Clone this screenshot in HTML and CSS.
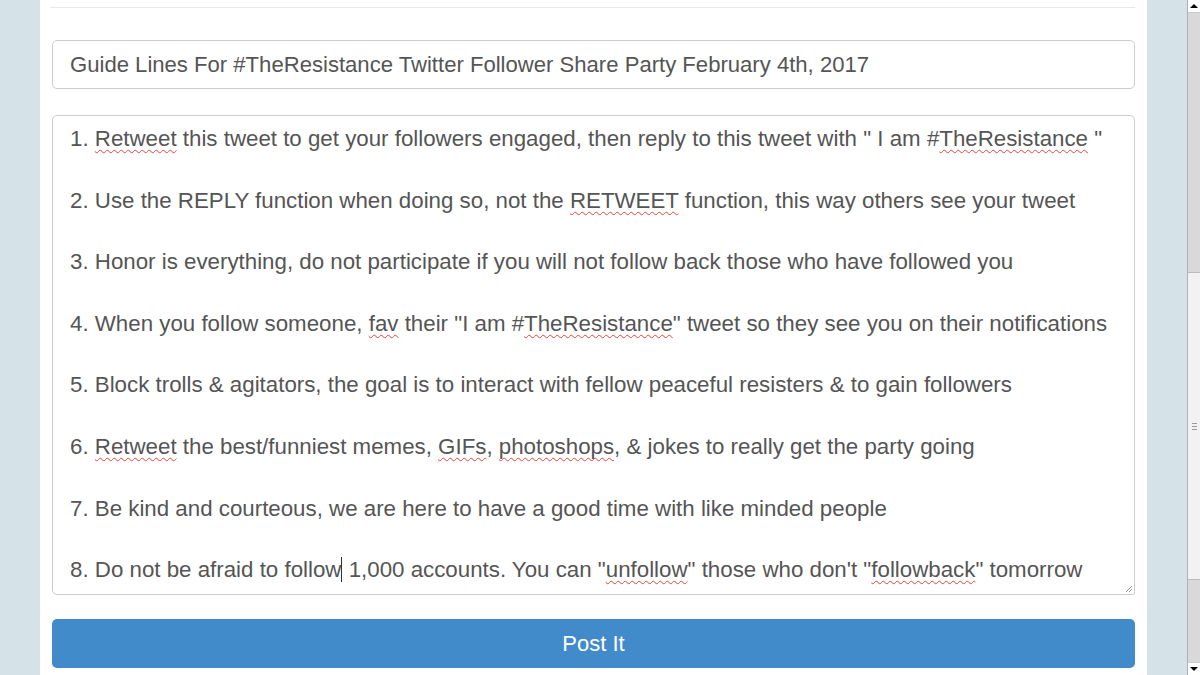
FILE: index.html
```html
<!DOCTYPE html>
<html lang="en">

<head>
    <meta charset="UTF-8">
    <meta name="viewport" content="width=device-width, initial-scale=1.0">
    <title>Post It</title>
    <link rel="stylesheet" href="styles.css">
</head>

<body>
    <div class="page">
        <div class="main">
            <div class="panel">
                <div class="rule"></div>

                <div class="title-input">Guide Lines For #TheResistance Twitter Follower Share Party February 4th, 2017</div>

                <div class="message">
                    <p>1. <span class="typo">Retweet</span> this tweet to get your followers engaged, then reply to this tweet with " I am #<span class="typo">TheResistance</span> "</p>
                    <p>2. Use the REPLY function when doing so, not the <span class="typo">RETWEET</span> function, this way others see your tweet</p>
                    <p>3. Honor is everything, do not participate if you will not follow back those who have followed you</p>
                    <p>4. When you follow someone, <span class="typo">fav</span> their "I am #<span class="typo">TheResistance</span>" tweet so they see you on their notifications</p>
                    <p>5. Block trolls &amp; agitators, the goal is to interact with fellow peaceful resisters &amp; to gain followers</p>
                    <p>6. <span class="typo">Retweet</span> the best/funniest memes, <span class="typo">GIFs</span>, <span class="typo">photoshops</span>, &amp; jokes to really get the party going</p>
                    <p>7. Be kind and courteous, we are here to have a good time with like minded people</p>
                    <p>8. Do not be afraid to follow<span class="caret"></span> 1,000 accounts. You can "<span class="typo">unfollow</span>" those who don't "<span class="typo">followback</span>" tomorrow</p>
                    <svg class="grip" width="8" height="8" viewBox="0 0 8 8">
                        <path d="M7 1 L1 7 M7 4 L4 7" stroke="#999" stroke-width="1" fill="none" />
                    </svg>
                </div>

                <button class="post-btn">Post It</button>
            </div>
        </div>

        <div class="scrollbar">
            <div class="sb-btn"><span class="arrow up"></span></div>
            <div class="sb-track top"></div>
            <div class="sb-thumb"><span class="sb-grip"></span></div>
            <div class="sb-track bottom"></div>
            <div class="sb-btn"><span class="arrow down"></span></div>
        </div>
    </div>
</body>

</html>
```

FILE: styles.css
```css
/* General Styles */
body {
    margin: 0;
    padding: 0;
    font-family: 'Liberation Sans', Arial, sans-serif;
    background: #d5e2e7;
    color: #555;
    overflow: hidden;
}

.page {
    display: flex;
    height: 675px;
}

.main {
    flex: 1;
    padding: 0 40px;
}

.panel {
    background: #fff;
    height: 100%;
    padding: 7px 12px 0;
    box-sizing: border-box;
}

.rule {
    border-top: 1px solid #e8e8e8;
    margin: 0 0 32px -2px;
}

/* Form fields */
.title-input {
    height: 49px;
    box-sizing: border-box;
    border: 1px solid #ccc;
    border-radius: 5px;
    padding: 0 17px;
    font-size: 22.1px;
    line-height: 47px;
    white-space: nowrap;
    margin-bottom: 26px;
}

.message {
    position: relative;
    height: 480px;
    box-sizing: border-box;
    border: 1px solid #ccc;
    border-radius: 5px 5px 2px 5px;
    padding: 8px 17px 6px;
    font-size: 22.3px;
    line-height: 30.8px;
    margin-bottom: 24px;
}

.message p {
    margin: 0 0 30.8px;
    white-space: nowrap;
}

.typo {
    text-decoration: underline wavy #e0443e;
    text-decoration-thickness: 1px;
    text-underline-offset: 3px;
    text-decoration-skip-ink: none;
}

.caret {
    display: inline-block;
    width: 1px;
    height: 25px;
    background: #333;
    vertical-align: -5px;
}

.grip {
    position: absolute;
    right: 1px;
    bottom: 1px;
}

/* Button */
.post-btn {
    display: block;
    width: 100%;
    height: 49px;
    border: none;
    border-radius: 5px;
    background-color: #428bca;
    color: #fff;
    font-family: 'Liberation Sans', Arial, sans-serif;
    font-size: 22px;
    cursor: pointer;
}

/* Scrollbar */
.scrollbar {
    width: 12px;
    border-left: 1px solid #b0b0b0;
    background: #d9d9d9;
    display: flex;
    flex-direction: column;
}

.sb-btn {
    height: 13px;
    background: #fff;
    border-bottom: 1px solid #ccc;
    display: flex;
    align-items: center;
    justify-content: center;
    box-sizing: border-box;
}

.sb-btn:last-child {
    border-bottom: none;
    border-top: 1px solid #ccc;
}

.arrow {
    width: 0;
    height: 0;
    border-left: 4px solid transparent;
    border-right: 4px solid transparent;
}

.arrow.up {
    border-bottom: 4px solid #000;
}

.arrow.down {
    border-top: 4px solid #000;
}

.sb-track.top {
    height: 259px;
}

.sb-track.bottom {
    flex: 1;
}

.sb-thumb {
    height: 308px;
    background: #f2f2f2;
    border-top: 1px solid #bbb;
    border-bottom: 1px solid #bbb;
    box-sizing: border-box;
    display: flex;
    align-items: center;
    justify-content: center;
}

.sb-grip {
    width: 5px;
    height: 5px;
    border-top: 1px solid #999;
    border-bottom: 1px solid #999;
    position: relative;
}

.sb-grip::after {
    content: "";
    position: absolute;
    left: 0;
    right: 0;
    top: 2px;
    border-top: 1px solid #999;
}
```
